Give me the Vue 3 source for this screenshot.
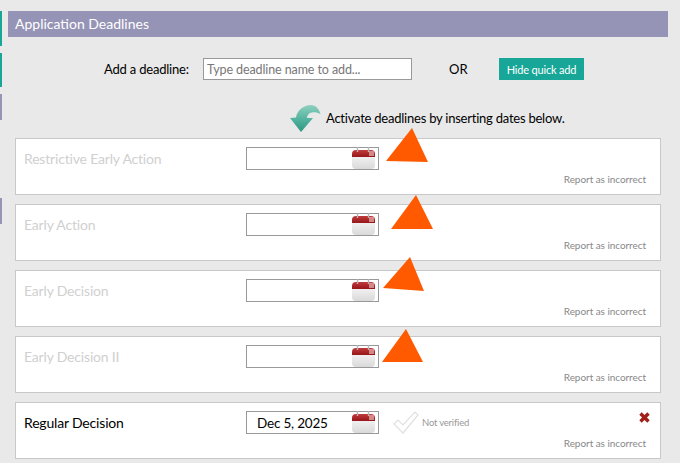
<script setup>
const rows = [
  { name: 'Restrictive Early Action', value: '' },
  { name: 'Early Action', value: '' },
  { name: 'Early Decision', value: '' },
  { name: 'Early Decision II', value: '' },
  { name: 'Regular Decision', value: 'Dec 5, 2025', active: true }
]
const triangles = [
  '386,161 412,128 428,162',
  '391,229 416,195 433,229',
  '383,288 410,257 424,291',
  '382,362 406,329 423,362'
]
</script>

<template>
  <div class="page">
    <div class="rail">
      <i class="tick teal t1"></i>
      <i class="tick teal t2"></i>
      <i class="tick purple t3"></i>
      <i class="tick purple t4"></i>
    </div>
    <div class="main">
      <h2 class="head">Application Deadlines</h2>
      <div class="quick">
        <label class="quick-label">Add a deadline:</label>
        <input class="quick-input" placeholder="Type deadline name to add..." />
        <span class="or">OR</span>
        <button class="hide">Hide quick add</button>
      </div>
      <div class="hint">
        <svg class="arrow" width="31" height="28" viewBox="0 0 31 28">
          <defs>
            <linearGradient id="ag" x1="0" y1="0" x2="0" y2="1">
              <stop offset="0" stop-color="#8fd0c0" />
              <stop offset="0.5" stop-color="#55b5a0" />
              <stop offset="1" stop-color="#2f9683" />
            </linearGradient>
          </defs>
          <path d="M0 13 L6 12.5 C7 5 14 0 21 0 C26 0 29 4 30.5 9 C27 7 23 6.5 20 8 C18 9 17 11 17 13 L23 13 L11 27 Z" fill="url(#ag)" />
        </svg>
        <span>Activate deadlines by inserting dates below.</span>
      </div>
      <div class="list">
        <div v-for="r in rows" :key="r.name" class="card">
          <div class="line">
            <span class="name" :class="{ on: r.active }">{{ r.name }}</span>
            <div class="date">
              <span class="date-val">{{ r.value }}</span>
              <svg class="cal" width="25" height="24" viewBox="0 0 25 24">
                <defs>
                  <linearGradient id="cb" x1="0" y1="0" x2="0" y2="1">
                    <stop offset="0" stop-color="#f4f4f4" />
                    <stop offset="1" stop-color="#d9d9d9" />
                  </linearGradient>
                  <linearGradient id="cr" x1="0" y1="0" x2="0" y2="1">
                    <stop offset="0" stop-color="#c23a3a" />
                    <stop offset="1" stop-color="#96171b" />
                  </linearGradient>
                </defs>
                <path d="M1 8 H24 V18 Q24 22 20 22 H5 Q1 22 1 18 Z" fill="url(#cb)" />
                <path d="M1 10 V7 Q1 3 5 3 H20 Q24 3 24 7 V10 Z" fill="url(#cr)" />
                <path d="M18 4 H23 V9 H18 Z" fill="#e0a0a0" opacity="0.8" />
                <path d="M6.5 0 V5 M17.5 0 V5" stroke="#b4b6be" stroke-width="1.4" />
              </svg>
            </div>
            <template v-if="r.active">
              <svg class="check" width="26" height="24" viewBox="0 0 26 24">
                <path d="M1 13 L5 9 L10 14 L22 1 L25 4 L10 22 Z" fill="#fff" stroke="#e0e0e0" stroke-width="1.2" />
              </svg>
              <span class="verify">Not verified</span>
              <svg class="x" width="11" height="11" viewBox="0 0 11 11">
                <path d="M1.5 1.5 L9.5 9.5 M9.5 1.5 L1.5 9.5" stroke="#a01f18" stroke-width="3.4" />
              </svg>
            </template>
          </div>
          <a class="report">Report as incorrect</a>
        </div>
      </div>
    </div>
    <svg class="marks" width="680" height="463" viewBox="0 0 680 463">
      <polygon v-for="t in triangles" :key="t" :points="t" fill="#ff5a00" />
    </svg>
  </div>
</template>

<style>
html, body { margin: 0; background: #e9e9e9; }
</style>

<style scoped>
.page {
  position: relative;
  width: 680px;
  height: 463px;
  overflow: hidden;
  display: flex;
  background: #e9e9e9;
  font-family: Lato, "Liberation Sans", sans-serif;
  color: #000;
}
.rail { position: relative; width: 8px; flex: none; }
.tick { position: absolute; left: 0; width: 2px; display: block; }
.teal { background: #17a697; }
.purple { background: #9694b6; }
.t1 { top: 11px; height: 35px; }
.t2 { top: 53px; height: 34px; }
.t3 { top: 94px; height: 26px; }
.t4 { top: 198px; height: 26px; }
.main { width: 660px; padding-top: 11px; }
.head {
  margin: 0;
  height: 26px;
  line-height: 26px;
  padding-left: 7px;
  background: #9694b6;
  color: #fff;
  font-size: 14px;
  font-weight: 400;
}
.quick {
  display: flex;
  align-items: center;
  height: 22px;
  margin-top: 21px;
}
.quick-label { margin-left: 96px; width: 99px; font-size: 13px; letter-spacing: -0.2px; }
.quick-input {
  box-sizing: border-box;
  width: 209px;
  height: 22px;
  padding: 0 3px;
  border: 1px solid #999;
  background: #fff;
  font: 12.5px Lato, sans-serif;
  letter-spacing: -0.1px;
  outline: none;
}
.quick-input::placeholder { color: #777; opacity: 1; }
.or { margin-left: 37px; width: 50px; font-size: 13px; }
.hide {
  width: 85px;
  height: 22px;
  padding: 0;
  border: 0;
  background: #17a697;
  color: #fff;
  font: 11px Lato, sans-serif;
  letter-spacing: -0.18px;
}
.hint {
  display: flex;
  align-items: center;
  height: 28px;
  margin-top: 24px;
  margin-left: 282px;
  font-size: 13px;
  letter-spacing: -0.23px;
  gap: 5px;
}
.arrow { flex: none; margin-top: 2px; }
.list {
  display: flex;
  flex-direction: column;
  gap: 9px;
  margin-top: 6px;
  margin-left: 7px;
  width: 646px;
}
.card {
  box-sizing: border-box;
  height: 57px;
  border: 1px solid #c8c8c8;
  background: #fff;
  padding: 8px 14px 0 8px;
  display: flex;
  flex-direction: column;
}
.line { display: flex; align-items: center; height: 23px; position: relative; }
.name { width: 222px; font-size: 14px; letter-spacing: -0.18px; color: #d0d0d0; }
.name.on { color: #000; }
.date {
  box-sizing: border-box;
  width: 133px;
  height: 23px;
  border: 1px solid #999;
  display: flex;
  align-items: center;
  font-size: 13.5px;
  letter-spacing: -0.2px;
  position: relative;
}
.date-val { padding-left: 10px; }
.cal { position: absolute; right: 2px; top: -1px; }
.check { margin-left: 14px; }
.verify { margin-left: 3px; font-size: 9.5px; letter-spacing: -0.2px; color: #999; }
.x { position: absolute; right: -4px; top: 1px; }
.report {
  margin-top: auto;
  margin-bottom: 9px;
  align-self: flex-end;
  font-size: 10px;
  letter-spacing: -0.05px;
  color: #888;
}
.marks { position: absolute; left: 0; top: 0; pointer-events: none; }
</style>
